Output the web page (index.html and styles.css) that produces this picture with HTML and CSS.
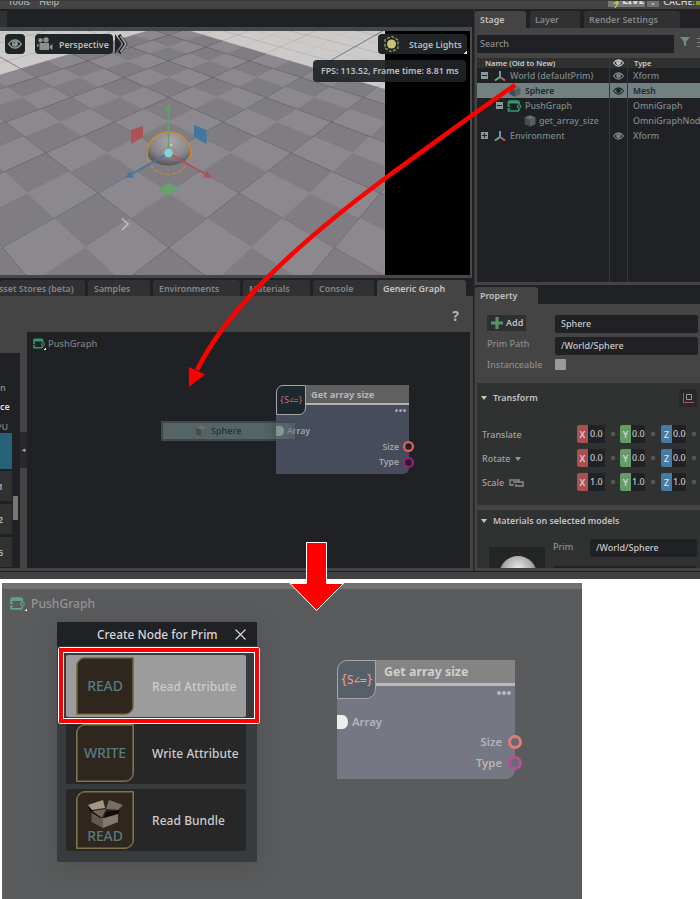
FILE: index.html
```html
<!DOCTYPE html>
<html lang="en">
<head>
<meta charset="utf-8">
<title>Create Node for Prim</title>
<link rel="stylesheet" href="styles.css">
</head>
<body>
<svg class="defs" width="0" height="0" aria-hidden="true">
  <symbol id="eye" viewBox="0 0 12 8"><path d="M.5 4Q3 .6 6 .6T11.500 4Q9 7.400 6 7.400T.5 4Z" fill="none" stroke="currentColor" stroke-width="1.200"/><circle cx="6" cy="3.700" r="2.600" fill="currentColor"/><path d="M5 2.800h1.200" stroke="#222" stroke-width=".8"/></symbol>
  <symbol id="axes" viewBox="0 0 12 12"><path d="M6 7.500V1" stroke="#56a8cc" stroke-width="1.900"/><path d="M6 7L1 10.600" stroke="#62b883" stroke-width="1.900"/><path d="M6 7L11 10.600" stroke="#c4605e" stroke-width="1.900"/></symbol>
  <symbol id="cube" viewBox="0 0 12 12"><path d="M6 .3L11.500 2.500L6 5L.5 2.500Z" fill="#667070"/><path d="M.5 2.500L6 5V11.700L.5 9.200Z" fill="#434d4d"/><path d="M11.500 2.500L6 5V11.700L11.500 9.200Z" fill="#566060"/></symbol>
  <symbol id="graph" viewBox="0 0 14 12"><path d="M1 3.500V2.200Q1 1 2.300 1H10Q11.500 1 11.500 2.500V4M11.500 9Q11.500 11 9.700 11H1V8.800M1 6.200V3" fill="none" stroke="currentColor" stroke-width="1.700"/><path d="M1.500 1H11.500V3.600H1Z" fill="currentColor"/><circle cx="11.600" cy="6.500" r="1.700" fill="none" stroke="currentColor" stroke-width="1.200"/><path d="M0 6.300H3M0 8.700H3" stroke="currentColor"/></symbol>
</svg>

<section class="app">
  <header class="menubar">
    <nav class="menus"><span>Tools</span><span>Help</span></nav>
    <div class="status"><span class="live"><svg width="7" height="7" viewBox="0 0 7 7"><path d="M5 0L2 2H5L2 7" fill="none" stroke="#c9cc3c" stroke-width="1.300"/></svg><b>LIVE</b></span><span class="live-drop"></span><span class="cache">CACHE:</span><i class="cache-dot"></i></div>
  </header>

  <main class="left">
    <div class="dockbar"><i></i></div>
    <div class="viewport">
      <svg id="scene" class="scene" width="385" height="244" viewBox="0 31 385 244"></svg>
      <div class="hud">
        <span class="chip eye-chip"><svg width="14" height="10"><use href="#eye"/></svg></span>
        <span class="chip camera"><svg width="17" height="14" viewBox="0 0 17 14"><circle cx="3.500" cy="3.300" r="2.200"/><circle cx="9" cy="2.900" r="2.700"/><path d="M2.500 6H12V13H2.500ZM0 7.300H1.600V9.700H0ZM12.600 8.800L15.500 7.200V13L12.600 11.200Z"/></svg><b>Perspective</b></span>
        <svg class="more" width="13" height="20" viewBox="0 0 13 20"><path d="M0 0L6 9V11L0 20Z" fill="#1f2427"/><path d="M4 1L10.500 10L4 19" fill="none" stroke="#1f2427" stroke-width="3.600"/><path d="M5.500 2L11 10L5.500 18" fill="none" stroke="#a2a6a6" stroke-width="1.500"/></svg>
        <span class="chip lights"><svg width="15" height="16" viewBox="0 0 15 16"><path d="M7.500 0L14 4V12L7.500 16L1 12V4Z" fill="none" stroke="#8b8d49" stroke-width="1.600" stroke-dasharray="3 1.600"/><circle cx="7.500" cy="8" r="4.500" fill="#c9c373"/></svg><b>Stage Lights</b></span>
      </div>
      <div class="fps">FPS: 113.52, Frame time: 8.81 ms</div>
    </div>
    <nav class="tabs">
      <span class="t1">Asset Stores (beta)</span><span class="t2">Samples</span><span class="t3">Environments</span><span class="t4">Materials</span><span class="t5">Console</span><span class="t6 on">Generic Graph</span>
    </nav>
    <div class="graph-panel">
      <aside class="catalog">
        <p class="c-n">n</p><p class="c-ce">ce</p><p class="c-pu">PU</p>
        <div class="cell sel"></div><div class="cell">1</div><div class="cell">2</div><div class="cell">6</div>
        <i class="thumb"></i>
      </aside>
      <div class="splitter"><span>◂</span></div>
      <div class="work">
        <div class="help">?</div>
        <div class="canvas">
          <div class="crumb"><svg width="12" height="11"><use href="#graph"/></svg><i class="corner"></i><span>PushGraph</span></div>
          <div class="node small">
            <div class="badge"><span>{S∠=}</span></div><div class="title">Get array size</div>
            <div class="dots"><i></i><i></i><i></i></div>
            <div class="in"><i></i><span>Array</span></div>
            <div class="out size"><span>Size</span><i></i></div>
            <div class="out type"><span>Type</span><i></i></div>
          </div>
          <div class="drag"><svg width="13" height="12"><use href="#cube"/></svg><span>Sphere</span></div>
        </div>
      </div>
    </div>
  </main>

  <aside class="right">
    <nav class="rtabs"><span class="on">Stage</span><span class="layer">Layer</span><span class="render">Render Settings</span></nav>
    <div class="stage">
      <div class="searchrow"><div class="search">Search</div><svg width="10" height="10" viewBox="0 0 10 10"><path d="M0 0H10L6.200 4.500V9.500L3.800 8V4.500Z" fill="#78878a"/></svg><span class="burger"><i></i><i></i><i></i></span></div>
      <div class="tree">
        <div class="row head"><span class="name">Name (Old to New)</span><span class="vis"><svg width="11" height="8"><use href="#eye"/></svg></span><span>Type</span></div>
        <div class="row"><span class="name"><i class="box"></i><svg width="12" height="12"><use href="#axes"/></svg>World (defaultPrim)</span><span class="vis"><svg width="11" height="8"><use href="#eye"/></svg></span><span>Xform</span></div>
        <div class="row picked"><span class="name l2"><svg width="12" height="12"><use href="#cube"/></svg>Sphere</span><span class="vis"><svg width="11" height="8"><use href="#eye"/></svg></span><span>Mesh</span></div>
        <div class="row"><span class="name l1"><i class="box"></i><svg class="green" width="15" height="12"><use href="#graph"/></svg>PushGraph</span><span class="vis"></span><span>OmniGraph</span></div>
        <div class="row"><span class="name l3"><svg width="12" height="12"><use href="#cube"/></svg>get_array_size</span><span class="vis"></span><span>OmniGraphNode</span></div>
        <div class="row"><span class="name"><i class="box plus"></i><svg width="12" height="12"><use href="#axes"/></svg>Environment</span><span class="vis"><svg width="11" height="8"><use href="#eye"/></svg></span><span>Xform</span></div>
        <div class="row fill"><span class="name"></span><span class="vis"></span><span></span></div>
      </div>
    </div>
    <nav class="ptabs"><span>Property</span></nav>
    <div class="props">
      <div class="prim">
        <div><span class="add"><svg width="12" height="12" viewBox="0 0 12 12"><path d="M6 0V12M0 6H12" stroke="#5d9163" stroke-width="3.200"/></svg>Add</span></div><div class="field">Sphere</div>
        <label>Prim Path</label><div class="field">/World/Sphere</div>
        <label>Instanceable</label><i class="check"></i>
      </div>
      <div class="group transform">
        <div class="ghead"><i class="tri"></i><span>Transform</span><span class="gizmo"><svg width="12" height="12" viewBox="0 0 12 12"><path d="M1.500 1V10.500" stroke="#4f8659"/><path d="M1 10.500H12" stroke="#b05552"/><path d="M4.500 2.500H9.500V7.500H4.500Z" fill="none" stroke="#999"/></svg></span></div>
        <div class="xyz"><label>Translate</label><span class="num x"><b>X</b>0.0</span><i></i><span class="num y"><b>Y</b>0.0</span><i></i><span class="num z"><b>Z</b>0.0</span><i></i></div>
        <div class="xyz"><label>Rotate <em class="tri"></em></label><span class="num x"><b>X</b>0.0</span><i></i><span class="num y"><b>Y</b>0.0</span><i></i><span class="num z"><b>Z</b>0.0</span><i></i></div>
        <div class="xyz"><label>Scale <svg width="15" height="8" viewBox="0 0 15 8"><path d="M5 6H1V1H10V3M5 4V3H14V7H7V5" fill="none" stroke="#8c8c8c" stroke-width="1.400"/></svg></label><span class="num x"><b>X</b>1.0</span><i></i><span class="num y"><b>Y</b>1.0</span><i></i><span class="num z"><b>Z</b>1.0</span><i></i></div>
      </div>
      <div class="group materials">
        <div class="ghead"><i class="tri"></i><span>Materials on selected models</span></div>
        <div class="mat"><div class="thumbnail"><i></i></div><label>Prim</label><div class="fields"><div class="field">/World/Sphere</div><div class="field next"></div></div></div>
      </div>
    </div>
  </aside>
  <footer class="bottombar"></footer>
</section>

<section class="result">
  <div class="crumb"><svg width="15" height="13"><use href="#graph"/></svg><i class="corner"></i><span>PushGraph</span></div>
  <div class="popup">
    <div class="phead"><span>Create Node for Prim</span><svg width="11" height="11" viewBox="0 0 11 11"><path d="M.5 .5L10.500 10.500M10.500 .5L.5 10.500" stroke="#ddd" stroke-width="1.100"/></svg></div>
    <div class="choices">
      <div class="choice hot"><div class="tile">READ</div><span>Read Attribute</span></div>
      <div class="choice write"><div class="tile">WRITE</div><span>Write Attribute</span></div>
      <div class="choice"><div class="tile bundle"><svg width="36" height="28" viewBox="0 0 36 28"><path d="M4.500 13L16 18V28L4.500 22Z" fill="#625a50"/><path d="M31 13L16 18V28L31 22Z" fill="#82786d"/><path d="M1 6L4 8L17 18H13L3 11Z" fill="#0c0a08"/><path d="M5 8L18 7L31 10L16 17Z" fill="#2b241e"/><path d="M1 5L16 0L18 8L5 10Z" fill="#a59786"/><path d="M22 0L36 5L31 10L19 9Z" fill="#776d62"/><path d="M5 11L19 9L15 18Z" fill="#71675c"/><path d="M19 12L33 10L31 14L17 18Z" fill="#0f0d0b"/></svg><span>READ</span></div><span>Read Bundle</span></div>
    </div>
  </div>
  <div class="node large">
    <div class="badge"><span>{S∠=}</span></div><div class="title">Get array size</div>
    <div class="dots"><i></i><i></i><i></i></div>
    <div class="in"><i></i><span>Array</span></div>
    <div class="out size"><span>Size</span><i></i></div>
    <div class="out type"><span>Type</span><i></i></div>
  </div>
</section>

<svg class="annotations" width="700" height="899" viewBox="0 0 700 899">
  <path d="M515 85C474 113 430 146 387 177C345 208 305 240 267 278C236 309 213 338 197 370" fill="none" stroke="#f00" stroke-width="4.600"/>
  <path d="M189 387L188.700 367L205 374.500Z" fill="#f00"/>
  <path d="M306.500 542.500H326.500V583.500H343.500L316.500 610.500L290 583.500H306.500Z" fill="#f00" stroke="#fff"/>
  <rect x="61" y="650" width="196" height="71" fill="none" stroke="#fff" stroke-width="6" stroke-linejoin="round"/>
  <rect x="61" y="650" width="196" height="71" fill="none" stroke="#f00" stroke-width="4"/>
</svg>
<script src="scene.js"></script>
</body>
</html>
```
FILE: styles.css
```css
* { box-sizing: border-box; }
body { margin: 0; width: 700px; height: 899px; overflow: hidden; background: #fff; position: relative; font: 500 9px/12px "Noto Sans", "Open Sans", sans-serif; color: #b5b5b5; white-space: nowrap; }
p { margin: 0; }
i, em { font-style: normal; }
svg { display: block; flex: none; }
.defs { position: absolute; }

.app { display: grid; grid-template-columns: 474px 226px; grid-template-rows: 9px 562px 8px; width: 700px; height: 579px; background: #1f2124; overflow: hidden; }
.menubar { grid-column: 1 / 3; display: flex; justify-content: space-between; background: #444; border-top: 1px solid #393939; overflow: hidden; }
.menus { display: flex; gap: 9px; padding-left: 8px; margin-top: -5px; font-weight: 500; font-size: 9px; }
.status { display: flex; align-items: flex-start; font-weight: 600; color: #ccc; }
.live { display: flex; gap: 2px; width: 37px; height: 6px; padding-left: 5px; background: #777; }
.live b { margin-top: -6px; font-size: 9.500px; color: #ddd; }
.live-drop { width: 12px; height: 6px; margin-left: 2px; background: radial-gradient(#bbb 1px, transparent 2px) #707070; }
.cache { margin: -5px 0 0 4px; font-size: 9px; }
.cache-dot { width: 4px; height: 4px; margin-left: 1px; background: #6da21e; }
.bottombar { grid-column: 1 / 3; background: #414141; border-top: 1px solid #1d1d1d; }

.left { display: flex; flex-direction: column; }
.dockbar { height: 18px; padding-top: 2px; }
.dockbar i { display: block; width: 7px; height: 16px; background: #303132; }
.viewport { position: relative; width: 472px; height: 251px; padding-top: 4px; border-right: 2px solid #4a4b4b; border-bottom: 3px solid #464848; background: linear-gradient(#464848 4px, #000 4px); }
.scene { width: 385px; height: 244px; }
.hud { position: absolute; left: 5px; top: 7px; width: 462px; display: flex; }
.chip { display: flex; align-items: center; height: 20px; border-radius: 4px; background: #1f2427; color: #bcbcbc; }
.chip b { font-weight: 600; font-size: 8.800px; padding-top: 1px; }
.eye-chip { width: 20px; justify-content: center; color: #8e9494; }
.camera { width: 78px; margin-left: 10px; padding-left: 2px; gap: 5px; }
.camera svg { fill: #8c9090; }
.more { margin-left: 2px; }
.lights { width: 89px; margin-left: auto; padding-left: 6px; gap: 10px; background: linear-gradient(135deg, transparent 50%, #ddd 50%) right bottom / 3px 3px no-repeat #1f2427; border-bottom-right-radius: 0; }
.fps { position: absolute; left: 313px; top: 33px; width: 153px; height: 22px; padding-left: 8px; border-radius: 4px; background: rgba(31,36,39,.93); color: #c0c0c0; font: 600 8.750px/22px "Noto Sans"; }

.tabs { display: flex; height: 18px; padding-top: 2px; }
.tabs span { height: 16px; margin-right: 3px; border-radius: 3px 3px 0 0; background: #303132; color: #858686; padding-left: 6px; line-height: 17px; font-weight: 600; font-size: 8.900px; }
.tabs .t1 { width: 85px; padding-left: 0; text-indent: -7px; }
.tabs .t2 { width: 62px; }
.tabs .t3 { width: 87px; }
.tabs .t4 { width: 67px; }
.tabs .t5 { width: 61px; }
.tabs .t6 { width: 89px; }
.tabs .on { background: #444; color: #c4c4c4; }

.graph-panel { display: flex; flex: 1; width: 473px; background: #444; padding-bottom: 3px; min-height: 0; }
.catalog { position: relative; width: 20px; height: 215px; margin-top: 57px; padding-top: 29px; background: #1f2124; font-weight: 600; overflow: hidden; }
.catalog p { height: 19px; line-height: 12px; }
.c-n { color: #888; } .c-ce { color: #ddd; }
.catalog .c-pu { text-indent: -4px; color: #777; height: 13px; line-height: 13px; }
.cell { width: 12px; height: 30px; margin-bottom: 3px; background: #303131; color: #b5b5b5; line-height: 31px; text-indent: -2px; }
.cell.sel { height: 36px; margin-bottom: 2px; background: #266079; }
.thumb { position: absolute; left: 13px; top: 143px; width: 5px; height: 24px; background: #777; }
.splitter { width: 7px; padding-top: 136px; }
.splitter span { display: block; height: 36px; background: #292929; color: #aaa; font: 7px/36px "DejaVu Sans"; text-align: center; }
.work { width: 443px; }
.help { height: 36px; padding-right: 11px; text-align: right; font: 700 14px/40px "Noto Sans"; color: #b5b5b5; }
.canvas { position: relative; height: 236px; background: #1f2124; }
.crumb { display: flex; color: #37966c; }
.crumb span { color: #7a7e7e; }
.corner { align-self: flex-end; width: 3px; height: 3px; margin: 0 2px 0 -4px; background: linear-gradient(135deg, transparent 50%, #eee 50%); }
.canvas .crumb { padding: 6px 0 0 6px; gap: 2px; }
.canvas .corner { margin-right: 0; }
.canvas .crumb span { font-size: 9.300px; line-height: 12px; }

.node { position: absolute; display: grid; color: #a1a4a9; font-weight: 600; }
.badge { grid-row: 1 / 3; display: flex; align-items: center; justify-content: center; border: 1px solid #a4a8a8; background: #1b282e; color: #ce6b70; font-family: "DejaVu Sans Mono"; font-weight: 400; z-index: 1; overflow: hidden; }
.title { background: #606061; color: #b7b7b7; border-bottom: 2px solid #b3b3b3; font-weight: 700; }
.dots { display: flex; justify-content: flex-end; gap: 1px; }
.dots i { width: 3px; height: 3px; border-radius: 50%; background: #a5a7ac; }
.in, .out { grid-column: 1 / 3; display: flex; align-items: center; }
.out { justify-content: flex-end; }
.out i { border-radius: 50%; border: 2px solid #e0605c; background: #1f2124; }
.type i { border-color: #a3197f; }
.in i { border-radius: 0 50% 50% 0; background: #ccc; }
.small { left: 249px; top: 53px; width: 133px; height: 89px; grid-template-columns: 30px 1fr; grid-template-rows: 20px 18px 16px 15.500px 15.500px; background: #474c5c; border-radius: 10px 0 6px 0; font-size: 9px; }
.small .badge { height: 30px; border-radius: 7px 0 7px 0; font-size: 8.500px; letter-spacing: -.4px; }
.small .title { padding-left: 5px; font-size: 9.300px; line-height: 19px; }
.small .dots { padding: 4px 3px 0 0; }
.small .in i { width: 8px; height: 10px; margin-right: 3px; }
.small .in span { font-size: 8.700px; }
.small .out span { font-size: 8.700px; }
.small .out i { width: 11px; height: 11px; margin: 0 -5px 0 4px; box-shadow: inset 0 0 0 .5px #8a4648; }
.small .type i { box-shadow: inset 0 0 0 .5px #65205a; }
.drag { position: absolute; left: 134px; top: 89px; width: 136px; height: 20px; display: flex; align-items: center; gap: 3px; padding-left: 32px; border: 2px solid rgba(56,67,68,.8); background: rgba(98,116,118,.82); color: #2d3538; font-weight: 600; box-shadow: 0 0 9px rgba(40,40,40,.5); -webkit-mask: linear-gradient(90deg, #000 75%, rgba(0,0,0,.55)); }

.right { display: flex; flex-direction: column; border-left: 1px solid #333; min-width: 0; overflow: hidden; }
.rtabs { display: flex; height: 19px; padding-top: 2px; gap: 4px; font-size: 8.900px; }
.rtabs span { height: 17px; padding-left: 5px; line-height: 18px; border-radius: 3px 3px 0 0; background: #303132; color: #858686; font-weight: 600; }
.rtabs .on, .ptabs span { background: #444; color: #c0c0c0; }
.rtabs .on { width: 51px; } .rtabs .layer { width: 50px; } .rtabs .render { width: 96px; }
.stage { height: 257px; padding: 6px 0 3px 2px; background: #444; }
.searchrow { display: flex; align-items: center; height: 19px; margin-bottom: 5px; }
.search { width: 198px; height: 18px; margin-right: 6px; padding-left: 3px; background: #1f2124; color: #8c8c8c; font-size: 9px; line-height: 18px; }
.searchrow svg { margin-top: -4px; }
.burger { margin-left: 7px; } .burger i { display: block; width: 3px; height: 1px; margin-bottom: 3px; background: #888; }
.tree { display: flex; flex-direction: column; height: 224px; background: #1f2124; }
.row { display: grid; grid-template-columns: 133px 18px 1fr; height: 15px; line-height: 16px; color: #7d898a; font-size: 8.900px; }
.row > span { padding-left: 5px; overflow: hidden; }
.row .name { display: flex; align-items: center; gap: 4px; padding-left: 4px; border-right: 1px solid #35383a; }
.row .vis { display: flex; align-items: center; padding-left: 3px; border-right: 1px solid #35383a; }
.row .l1 { padding-left: 19px; gap: 3px; } .row .l2 { padding-left: 32px; gap: 4px; } .row .l3 { padding-left: 47px; gap: 3px; }
.row.head { height: 10px; line-height: 10px; background: #2f3131; color: #ccc; font-size: 7.600px; font-weight: 600; }
.head .name { padding-left: 8px; }
.head > span:last-child { padding-left: 6px; }
.row.picked { background: #718081; color: #20282a; font-weight: 600; font-size: 8.600px; }
.row.fill { flex: 1; }
.green { color: #3b966c; }
.box { width: 7px; height: 7px; margin-right: 2px; background: linear-gradient(#222, #222) center / 5px 1px no-repeat #8b9799; }
.l1 .box { margin-right: 1px; }
.box.plus { background: linear-gradient(#222, #222) center / 5px 1px no-repeat, linear-gradient(#222, #222) center / 1px 5px no-repeat #8b9799; }
.ptabs { height: 19px; padding-top: 2px; }
.ptabs span { display: block; width: 63px; height: 17px; padding-left: 5px; border-radius: 3px 3px 0 0; line-height: 18px; font-weight: 600; font-size: 8.800px; }
.props { flex: 1; display: flex; flex-direction: column; padding: 11px 0 3px 2px; background: #444; min-height: 0; }
.prim { display: grid; grid-template-columns: 68px 143px; grid-template-rows: 18px 18px 11px; row-gap: 3.500px; height: 68px; padding-left: 10px; font-size: 9px; }
.prim label { color: #8b8b8b; line-height: 14px; }
.add { display: flex; align-items: center; gap: 3px; width: 39px; height: 16px; padding-left: 4px; background: #2e2f2f; color: #c0c0c0; font-weight: 600; }
.field { height: 18px; padding-left: 6px; background: #1f2124; color: #c8c8c8; font-size: 9px; line-height: 18px; border-radius: 2px; }
.check { width: 11px; height: 11px; background: #999; border-radius: 1px; margin-top: 1px; }
.prim label:nth-of-type(2) { line-height: 13px; }
.group { background: #303232; }
.transform { height: 122px; margin-bottom: 5px; }
.ghead { display: flex; align-items: center; height: 29px; padding-left: 4px; font-size: 8.900px; font-weight: 600; color: #c0c0c0; }
.tri { width: 0; height: 0; border: 3px solid transparent; border-top: 4px solid #c5c5c5; border-bottom: 0; margin-right: 6px; }
.xyz .tri { border-top-color: #999; }
.gizmo { display: flex; align-items: center; justify-content: center; width: 18px; height: 18px; margin: 0 3px 0 auto; background: #282828; }
.transform .ghead { margin-bottom: 13px; }
.xyz { display: flex; align-items: center; height: 18px; margin-bottom: 6px; padding-left: 5px; color: #a0a0a0; font-size: 9px; }
.xyz label { display: flex; align-items: center; gap: 5px; flex: none; width: 95px; padding-top: 1px; }
.xyz > i { flex: none; width: 4px; height: 4px; margin: 0 6px; background: #555; border-radius: 1px; }
.num { display: flex; flex: none; align-items: center; width: 25px; height: 18px; gap: 1px; background: #1f2124; color: #c8c8c8; border-radius: 2px; font-size: 9px; }
.num.x { width: 28px; gap: 2px; }
.num.x + i { margin-right: 5px; }
.num b { width: 11px; height: 18px; font-weight: 500; font-size: 9.500px; line-height: 19px; text-align: center; color: #ddd; border-radius: 2px 0 0 2px; }
.x b { background: #a95051; } .y b { background: #669c68; } .z b { background: #467ba4; }
.materials { flex: 1; overflow: hidden; min-height: 0; }
.materials .ghead { height: 22px; font-size: 8.900px; }
.mat { display: flex; padding-left: 12px; margin-top: 6px; font-size: 9px; color: #8a9090; }
.thumbnail { width: 56px; height: 50px; margin-top: 9px; padding: 9px 0 0 10px; background: #242525; }
.thumbnail i { display: block; width: 38px; height: 38px; border-radius: 50%; background: radial-gradient(circle at 50% 35%, #eee, #aaa 45%, #555 75%); }
.mat label { width: 37px; margin-left: 8px; line-height: 17px; }
.fields { width: 107px; }
.mat .field { margin-top: 1px; }
.mat .field.next { margin: 9px 0 0 -36px; }

.result { position: relative; width: 580px; height: 316px; margin: 4px 0 0 2px; border-top: 6px solid #717272; border-left: 1px solid #626363; background: #5a5b5c; }
.result > .crumb { padding: 8px 0 0 7px; gap: 3px; color: #63a182; }
.result > .crumb .corner { margin-right: 1px; }
.result > .crumb span { color: #949595; font: 500 12.100px/14px "Noto Sans"; }
.popup { position: absolute; left: 54px; top: 33px; width: 200px; height: 240px; background: #373b3e; border-radius: 2px; box-shadow: 0 4px 24px rgba(50,50,50,.25); }
.phead { display: flex; align-items: center; height: 24px; background: #1f2124; color: #d6d6d6; font: 500 11.900px/26px "Noto Sans"; }
.phead span { width: 178px; padding-left: 40px; }
.choices { display: flex; flex-direction: column; gap: 5px; padding: 9px; }
.choice { display: flex; align-items: center; width: 180px; height: 62px; padding-left: 10px; gap: 18px; background: #272727; border-radius: 2px; color: #ccc; font: 500 12px/16px "Noto Sans"; letter-spacing: .05px; }
.choice > span { padding-top: 2px; }
.choice.hot { background: #9c9c9c; color: #ccc; }
.tile { display: flex; flex-direction: column; align-items: center; justify-content: center; flex: none; width: 58px; height: 58px; border: 1px solid #7e7250; box-shadow: inset 0 0 0 .6px #7e7250; border-radius: 9px 0 9px 0; background: #2f271e; color: #567b80; font-size: 14px; letter-spacing: -.1px; }
.tile span { line-height: 16px; }
.tile svg { margin-top: 4px; }
.large { left: 334px; top: 71px; width: 178px; height: 119px; grid-template-columns: 39px 1fr; grid-template-rows: 26px 25px 21px 21px 21px; background: #757882; border-radius: 12px 0 9px 0; font-size: 11.300px; color: #b4b5b9; }
.large .badge { height: 39px; border-radius: 10px 0 10px 0; background: #576066; color: #f0999a; font-size: 11.500px; letter-spacing: -.5px; }
.large .title { padding-left: 8px; background: #848484; color: #cfcfcf; border-color: #b9b9b9; border-width: 3px; font-size: 12.400px; line-height: 23px; }
.large .dots { padding: 5px 4px 0 0; }
.large .dots i { width: 4px; height: 4px; background: #b9bbc0; }
.large .in i { width: 11px; height: 14px; margin-right: 4px; background: #eee; }
.large .out { margin-top: -2px; }
.large .out i { width: 14px; height: 14px; margin: 0 -7px 0 6px; border: 3px solid #e27c7a; background: #676a70; }
.large .type i { border-color: #b84f96; }
.annotations { position: absolute; left: 0; top: 0; pointer-events: none; }
```
FILE: scene.js
```js
// Projects the checkered ground plane and the manipulator into the viewport.
const NS = "http://www.w3.org/2000/svg";
const scene = document.getElementById("scene");

function project(u, v) {
  const w = 1 - 0.065 * (u + v);
  return [168.5 + 30.7 * (u - v) / w, 153 + 17.5 * (u + v) / w];
}
function add(tag, attrs) {
  const el = document.createElementNS(NS, tag);
  for (const k in attrs) el.setAttribute(k, attrs[k]);
  scene.appendChild(el);
}
function line(a, b, stroke, width, opacity) {
  add("path", { d: "M" + project(...a) + "L" + project(...b), stroke, "stroke-width": width, opacity });
}

add("rect", { x: 0, y: 31, width: 385, height: 244, fill: "#cdcaca" });
for (let i = -20; i <= -7; i++) {
  const o = i % 2 ? 0.2 : 0.5;
  line([i, -20], [i, 7], "#969494", 0.7, o);
  line([-20, i], [7, i], "#969494", 0.7, o);
}
for (let i = -6; i <= 7; i++) {
  const o = i % 2 ? 0.2 : 0.5;
  line([-20, i], [-7, i], "#969494", 0.7, o);
  line([i, -20], [i, -7], "#969494", 0.7, o);
}
for (let u = -7; u < 7; u++) {
  for (let v = -7; v < 7; v++) {
    const pts = [project(u, v), project(u + 1, v), project(u + 1, v + 1), project(u, v + 1)];
    const fill = (u + v) % 2 ? "#8b888e" : "#7f7c82";
    add("polygon", { points: pts.join(" "), fill, stroke: fill, "stroke-width": 0.5 });
  }
}
for (let i = -6; i <= 6; i += 2) {
  if (i === 0) continue;
  line([i, -7], [i, 7], "#55545a", 0.8, 0.65);
  line([-7, i], [7, i], "#55545a", 0.8, 0.65);
}
line([-14, 0], [7, 0], "#8e5d63", 0.9, 0.75);
line([0, -14], [0, 7], "#5f7383", 0.9, 0.9);

scene.insertAdjacentHTML("beforeend", `
  <defs><radialGradient id="ball" cx=".55" cy=".3" r=".75"><stop offset="0" stop-color="#aaa7aa"/><stop offset=".6" stop-color="#89868a"/><stop offset="1" stop-color="#4e4c51"/></radialGradient></defs>
  <path d="M147 153a21.500 21.500 0 0 1 43 0q-1 6-8 9.500q-13 6-27 0q-7-3-8-9.500Z" fill="url(#ball)"/>
  <path d="M149 162a21.700 21.700 0 1 1 41 -3" fill="none" stroke="#d48a22" stroke-width="1.200"/>
  <path d="M148 160a21.700 21.700 0 0 0 40 2" fill="none" stroke="#c9892f" stroke-width="1.200" stroke-dasharray="4 2"/>
  <g stroke-width="1.600"><path d="M168.500 153V108" stroke="#62a06d"/><path d="M168.500 153L131 174.500" stroke="#4578a0"/><path d="M168.500 153L206 174.500" stroke="#ae5355"/></g>
  <path d="M168.500 103l3.200 8h-6.400Z" fill="#62a06d"/>
  <path d="M125 178l5-7 4 6.500Z" fill="#4578a0"/><path d="M212 178l-5-7-4 6.500Z" fill="#ae5355"/>
  <path d="M131 130l12-4v11l-12 7Z" fill="#ad5254"/><path d="M194 125l12.500 5v14l-12.500-7Z" fill="#4377a0"/>
  <path d="M168.500 182.500l10.500 6.500-10.500 7-10-7Z" fill="#65a26e"/>
  <circle cx="168.500" cy="153" r="4.300" fill="#83d6db"/><circle cx="171" cy="145" r="1" fill="#ddd"/>
  <path d="M122 218.500l6 5.500-6 6" fill="none" stroke="#c4bdb4" stroke-width="1.600"/>`);
```
